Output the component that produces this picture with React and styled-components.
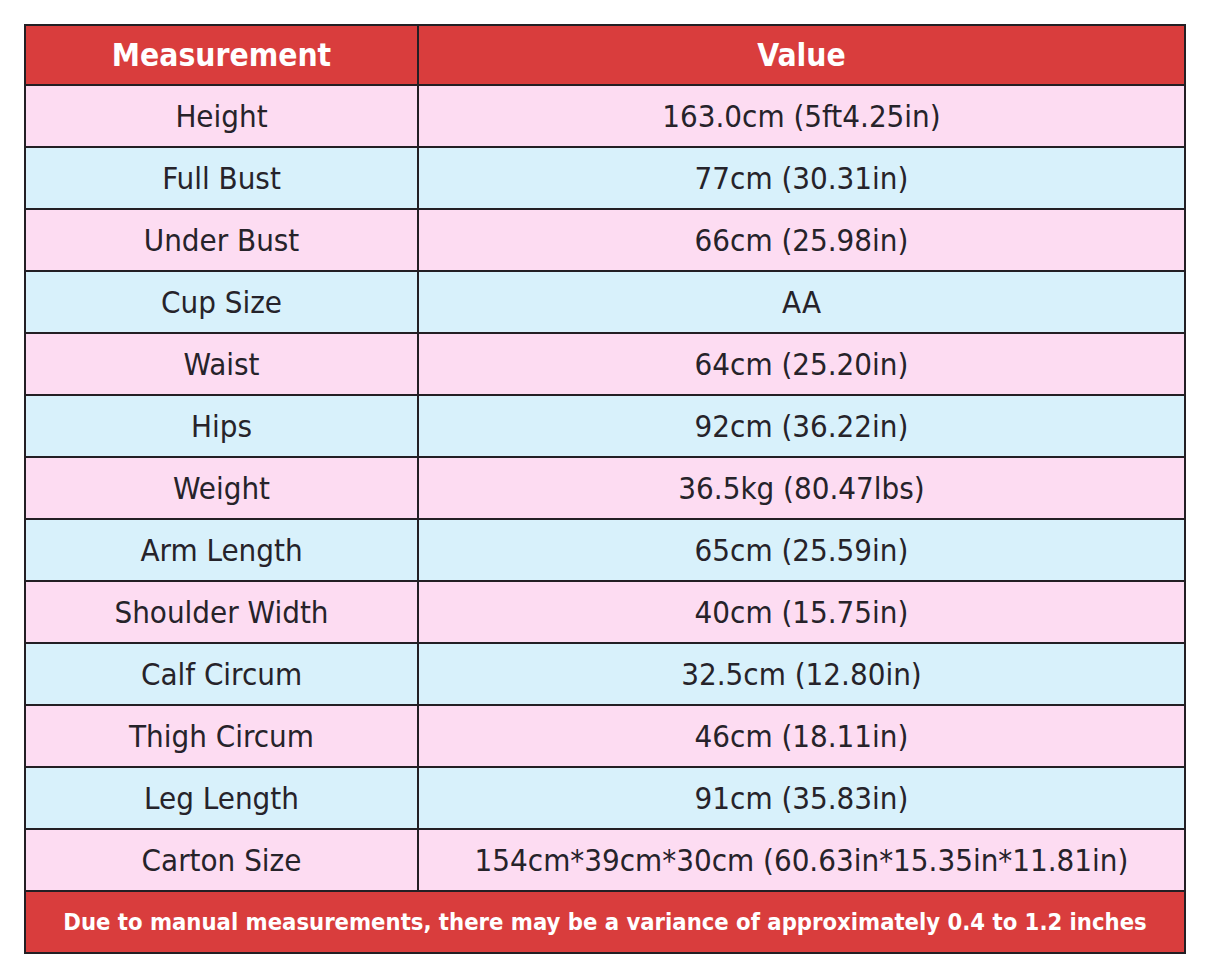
import React from "react";
import styled, { createGlobalStyle } from "styled-components";

const GlobalStyle = createGlobalStyle`
  html, body { margin: 0; padding: 0; background: #ffffff; }
  body { font-family: "DejaVu Sans Condensed", "DejaVu Sans", Verdana, sans-serif; }
`;

const Page = styled.div`
  padding: 24px;
  background: #ffffff;
`;

const Table = styled.table`
  width: 1162px;
  border-collapse: separate;
  border-spacing: 0;
  border: 2px solid #231f24;
  table-layout: fixed;
  box-sizing: border-box;
`;

const Cell = styled.td`
  box-sizing: border-box;
  height: ${(p) => (p.$header ? "58px" : "62px")};
  padding: 0 8px;
  text-align: center;
  vertical-align: middle;
  font-size: ${(p) => (p.$header ? "31.5px" : "31px")};
  font-weight: ${(p) => (p.$header ? 700 : 400)};
  color: ${(p) => (p.$header ? "#ffffff" : "#26232a")};
  background: ${(p) => p.$bg};
  border-top: ${(p) => (p.$first ? "none" : "2px solid #231f24")};
  border-right: ${(p) => (p.$left ? "2px solid #231f24" : "none")};
  width: ${(p) => (p.$left ? "393px" : "auto")};
  white-space: nowrap;
`;

const FooterCell = styled.td`
  box-sizing: border-box;
  height: 62px;
  padding: 0 8px;
  text-align: center;
  vertical-align: middle;
  font-size: 23.6px;
  font-weight: 700;
  color: #ffffff;
  background: #d93d3d;
  border-top: 2px solid #231f24;
  white-space: nowrap;
`;

const RED = "#d93d3d";
const PINK = "#fddcf2";
const BLUE = "#d8f1fb";

const rows = [
  ["Height", "163.0cm (5ft4.25in)"],
  ["Full Bust", "77cm (30.31in)"],
  ["Under Bust", "66cm (25.98in)"],
  ["Cup Size", "AA"],
  ["Waist", "64cm (25.20in)"],
  ["Hips", "92cm (36.22in)"],
  ["Weight", "36.5kg (80.47lbs)"],
  ["Arm Length", "65cm (25.59in)"],
  ["Shoulder Width", "40cm (15.75in)"],
  ["Calf Circum", "32.5cm (12.80in)"],
  ["Thigh Circum", "46cm (18.11in)"],
  ["Leg Length", "91cm (35.83in)"],
  ["Carton Size", "154cm*39cm*30cm (60.63in*15.35in*11.81in)"],
];

export default function App() {
  return (
    <>
      <GlobalStyle />
      <Page>
        <Table>
          <thead>
            <tr>
              <Cell as="th" $header $first $left $bg={RED}>Measurement</Cell>
              <Cell as="th" $header $first $bg={RED}>Value</Cell>
            </tr>
          </thead>
          <tbody>
            {rows.map(([k, v], i) => {
              const bg = i % 2 === 0 ? PINK : BLUE;
              return (
                <tr key={k}>
                  <Cell $left $bg={bg}>{k}</Cell>
                  <Cell $bg={bg}>{v}</Cell>
                </tr>
              );
            })}
          </tbody>
          <tfoot>
            <tr>
              <FooterCell colSpan={2}>
                Due to manual measurements, there may be a variance of approximately 0.4 to 1.2 inches
              </FooterCell>
            </tr>
          </tfoot>
        </Table>
      </Page>
    </>
  );
}
